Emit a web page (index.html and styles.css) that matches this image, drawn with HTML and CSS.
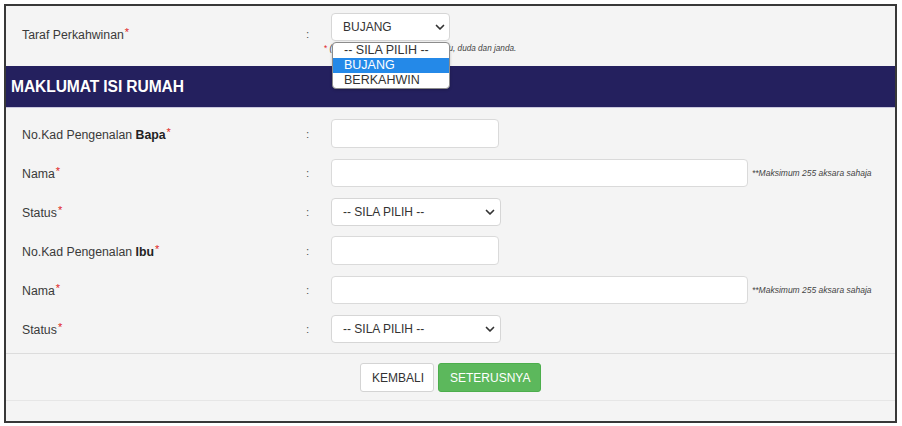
FILE: index.html
```html
<!DOCTYPE html>
<html lang="ms">
<head>
  <meta charset="UTF-8" />
  <meta name="viewport" content="width=device-width, initial-scale=1.0"/>
  <title>Maklumat Isi Rumah</title>
  <link rel="stylesheet" href="styles.css">
</head>
<body>

  <div class="frame">

    <section class="top">
      <div class="row row-top">
        <div class="label">Taraf Perkahwinan<span class="req">*</span></div>
        <div class="colon">:</div>
        <div class="field field-stack">
          <div class="select-wrap small">
            <select class="select">
              <option>BUJANG</option>
            </select>
            <svg class="chev" width="10" height="7" viewBox="0 0 10 7"><path d="M1.5 1.5l3.5 3.5 3.5-3.5" fill="none" stroke="#333" stroke-width="1.7" stroke-linecap="round" stroke-linejoin="round"/></svg>
            <ul class="dropdown">
              <li>-- SILA PILIH --</li>
              <li class="active">BUJANG</li>
              <li>BERKAHWIN</li>
            </ul>
          </div>
          <div class="note"><span class="red">*</span> <span class="note-head">(termasuk ibu/bapa tunggal, bal</span>u, duda dan janda.</div>
        </div>
      </div>
    </section>

    <h2 class="band">MAKLUMAT ISI RUMAH</h2>

    <section class="rows">
      <div class="row">
        <div class="label">No.Kad Pengenalan <b>Bapa</b><span class="req">*</span></div>
        <div class="colon">:</div>
        <div class="field"><input type="text" class="input ic"></div>
      </div>
      <div class="row">
        <div class="label">Nama<span class="req">*</span></div>
        <div class="colon">:</div>
        <div class="field"><input type="text" class="input name"><span class="hint">**Maksimum 255 aksara sahaja</span></div>
      </div>
      <div class="row">
        <div class="label">Status<span class="req">*</span></div>
        <div class="colon">:</div>
        <div class="field">
          <div class="select-wrap">
            <select class="select"><option>-- SILA PILIH --</option></select>
            <svg class="chev" width="10" height="7" viewBox="0 0 10 7"><path d="M1.5 1.5l3.5 3.5 3.5-3.5" fill="none" stroke="#333" stroke-width="1.7" stroke-linecap="round" stroke-linejoin="round"/></svg>
          </div>
        </div>
      </div>
      <div class="row">
        <div class="label">No.Kad Pengenalan <b>Ibu</b><span class="req">*</span></div>
        <div class="colon">:</div>
        <div class="field"><input type="text" class="input ic"></div>
      </div>
      <div class="row">
        <div class="label">Nama<span class="req">*</span></div>
        <div class="colon">:</div>
        <div class="field"><input type="text" class="input name"><span class="hint">**Maksimum 255 aksara sahaja</span></div>
      </div>
      <div class="row">
        <div class="label">Status<span class="req">*</span></div>
        <div class="colon">:</div>
        <div class="field">
          <div class="select-wrap">
            <select class="select"><option>-- SILA PILIH --</option></select>
            <svg class="chev" width="10" height="7" viewBox="0 0 10 7"><path d="M1.5 1.5l3.5 3.5 3.5-3.5" fill="none" stroke="#333" stroke-width="1.7" stroke-linecap="round" stroke-linejoin="round"/></svg>
          </div>
        </div>
      </div>
    </section>

    <div class="actions">
      <button type="button" class="btn btn-back">KEMBALI</button>
      <button type="button" class="btn btn-next">SETERUSNYA</button>
    </div>

    <div class="foot"></div>
  </div>

</body>
</html>
```

FILE: styles.css
```css
* {
  box-sizing: border-box;
}

body {
  margin: 0;
  background: #ffffff;
  font-family: "Liberation Sans", Arial, sans-serif;
  color: #333;
}

.frame {
  margin: 4px 5px 3px 4px;
  border: 2px solid #383838;
  background: #f4f4f4;
  height: 419px;
  display: flex;
  flex-direction: column;
}

.top {
  height: 60px;
  padding-top: 7px;
}

.row {
  display: grid;
  grid-template-columns: 284px 25px 1fr;
  align-items: center;
  padding-left: 16px;
  height: 39px;
}

.row-top {
  height: auto;
}

.label {
  font-size: 12.3px;
  color: #3a3a3a;
}

.label b {
  color: #222;
}

.req {
  color: #e02424;
  font-size: 11px;
  vertical-align: 3px;
  margin-left: 1px;
}

.colon {
  font-size: 11.5px;
  color: #555;
}

.field {
  display: flex;
  align-items: center;
}

.field-stack {
  flex-direction: column;
  align-items: flex-start;
}

.input {
  height: 29px;
  border: 1px solid #dadada;
  border-radius: 4px;
  background: #fff;
  font-family: inherit;
  font-size: 12px;
  padding: 0 10px;
  outline: none;
}

.input.ic {
  width: 168px;
}

.input.name {
  width: 417px;
  height: 28px;
}

.hint {
  margin-left: 4px;
  font-size: 8.5px;
  font-style: italic;
  color: #444;
}

.select-wrap {
  position: relative;
  width: 170px;
  height: 28px;
}

.select-wrap.small {
  width: 119px;
  height: 28px;
}

.select {
  appearance: none;
  -webkit-appearance: none;
  width: 100%;
  height: 100%;
  border: 1px solid #d6d6d6;
  border-radius: 4px;
  background: #fff;
  font-family: inherit;
  font-size: 12px;
  color: #333;
  padding: 0 20px 0 11px;
  outline: none;
}

.chev {
  position: absolute;
  right: 6px;
  top: 11px;
  pointer-events: none;
}

.select-wrap.small .chev {
  right: 5px;
}

.note {
  margin-top: 3px;
  margin-left: -7px;
  font-size: 8.2px;
  line-height: 10px;
  font-style: italic;
  color: #444;
  white-space: nowrap;
}

/* part of the note that sits under the open list */
.note-head {
  display: inline-block;
  width: 119px;
  overflow: hidden;
  vertical-align: bottom;
}

.red {
  color: #e02424;
  font-style: normal;
}

/* native-looking open list */
.dropdown {
  position: absolute;
  top: 29px;
  left: 1px;
  width: 118px;
  margin: 0;
  padding: 0;
  list-style: none;
  background: #fff;
  border: 1px solid #8c8c8c;
  border-radius: 4px;
  box-shadow: 0 1px 3px rgba(0, 0, 0, 0.2);
  overflow: hidden;
  z-index: 2;
}

.dropdown li {
  height: 15px;
  line-height: 15px;
  padding-left: 11px;
  font-size: 12.5px;
  color: #333;
}

.dropdown li.active {
  background: #2489e8;
  color: #fff;
}

.band {
  margin: 0;
  height: 42px;
  background: #24205e;
  border-bottom: 1px solid #c9c7dd;
  color: #fff;
  font-size: 15.6px;
  font-weight: bold;
  line-height: 41px;
  padding-left: 5px;
  letter-spacing: -0.1px;
}

.rows {
  padding: 6px 0 5px;
}

.actions {
  border-top: 1px solid #dcdcdc;
  border-bottom: 1px solid #e6e6e6;
  padding: 9px 0 8px;
  display: flex;
  justify-content: center;
  gap: 4px;
}

.btn {
  height: 29px;
  border-radius: 3px;
  font-family: inherit;
  font-size: 12px;
  padding: 0 11px;
  cursor: pointer;
}

.btn-back {
  background: #fff;
  border: 1px solid #d4d4d4;
  color: #333;
  width: 74px;
}

.btn-next {
  background: #5cb85c;
  border: 1px solid #4cae4c;
  color: #fff;
  width: 103px;
}

.foot {
  flex: 1;
}
```
